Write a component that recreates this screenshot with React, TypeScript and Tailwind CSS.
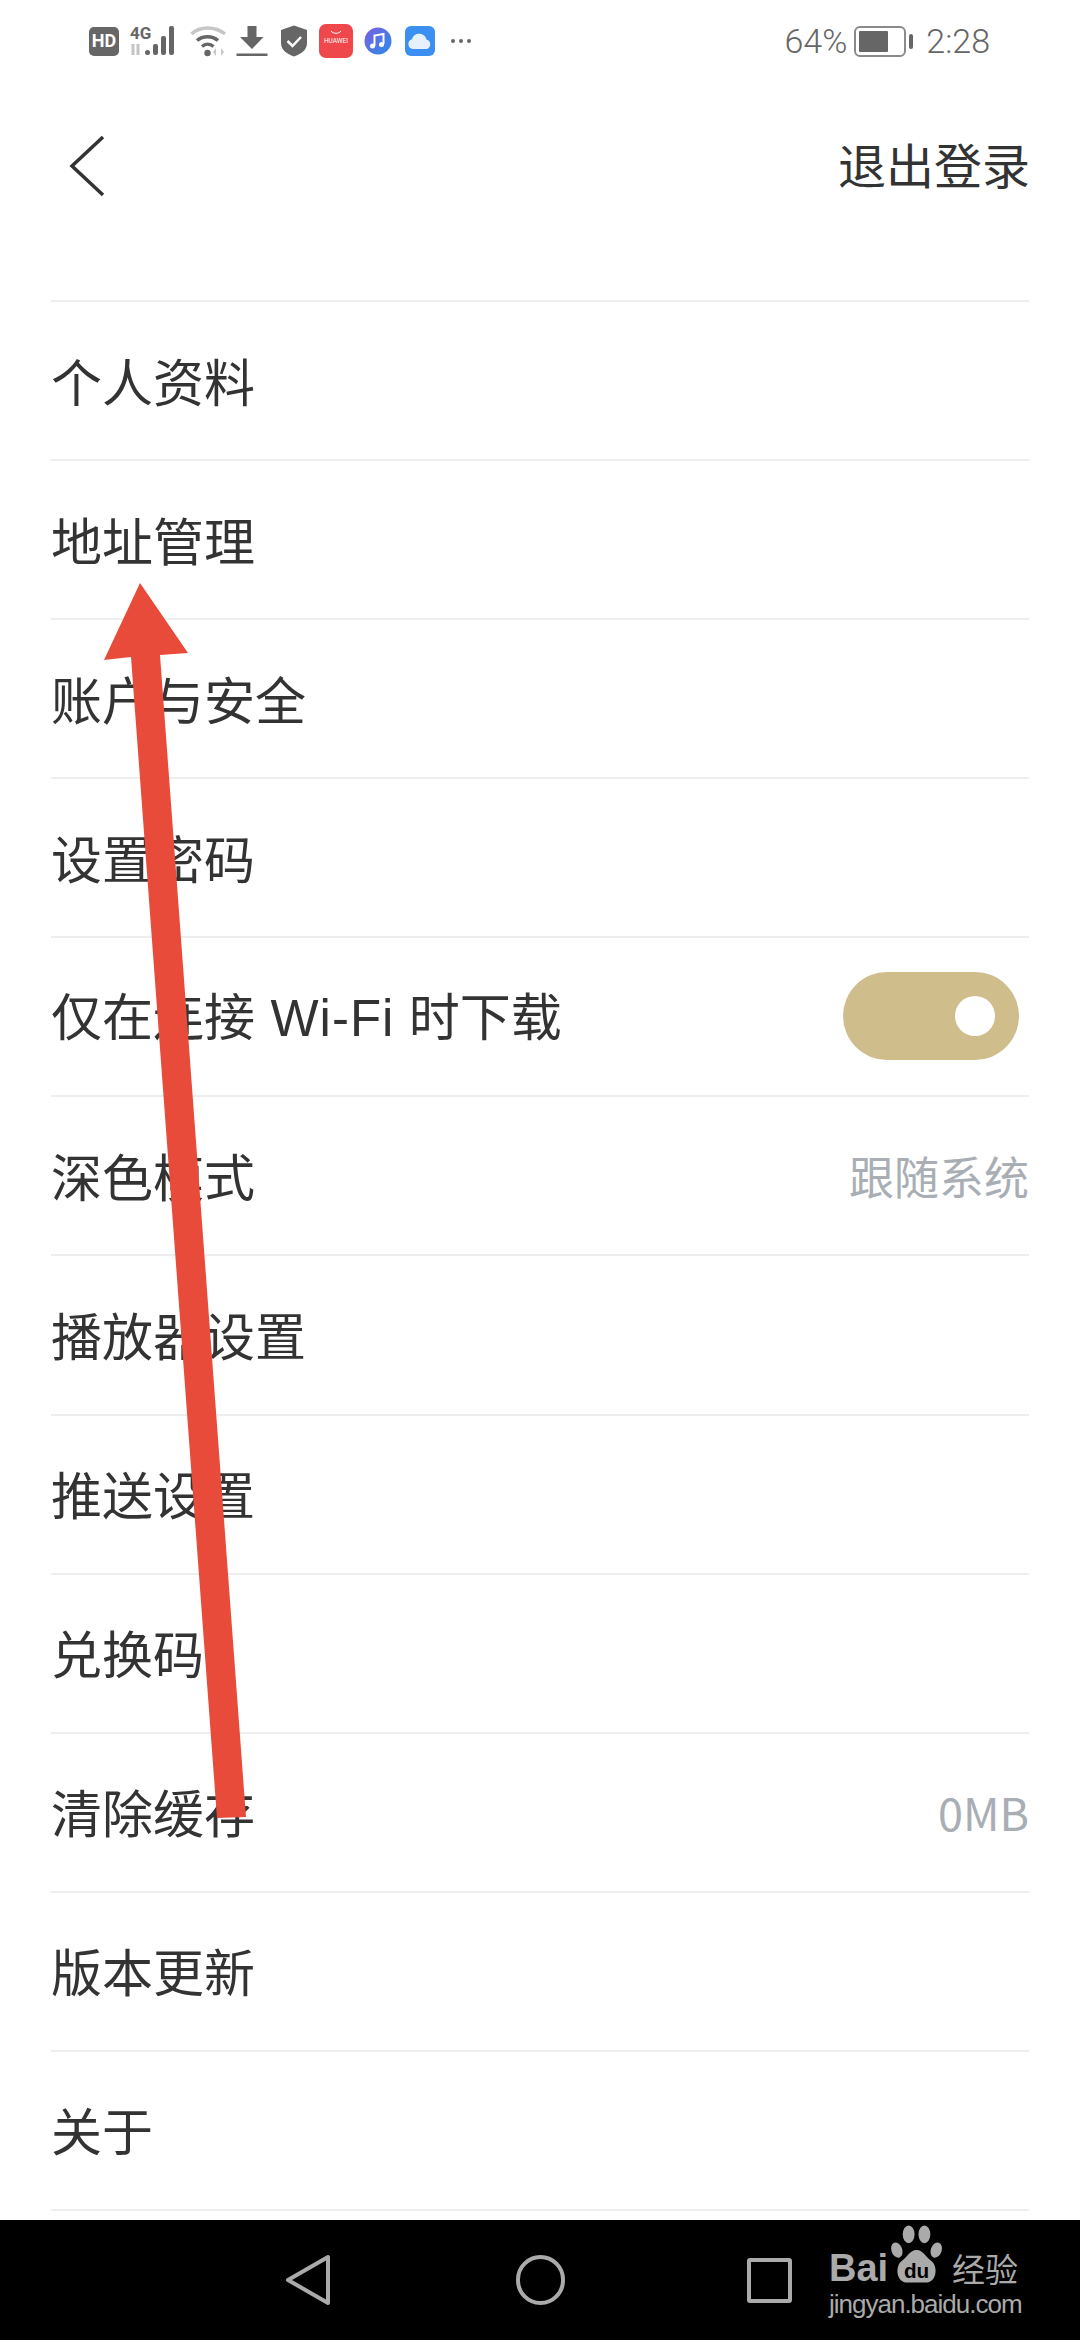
import type { ReactNode } from "react";

const cjk = "font-['Noto_Sans_CJK_SC','Noto_Sans',sans-serif]";

type Row = { id: string; label: ReactNode; value?: string; toggle?: boolean };

const rows: Row[] = [
  { id: "profile", label: "个人资料" },
  { id: "address", label: "地址管理" },
  { id: "account", label: "账户与安全" },
  { id: "password", label: "设置密码" },
  {
    id: "wifi",
    label: (
      <>
        仅在连接 <span className="ml-[4px] mr-[3px] font-['Liberation_Sans',sans-serif] tracking-[1px]">Wi-Fi</span> 时下载
      </>
    ),
    toggle: true,
  },
  { id: "dark", label: "深色模式", value: "跟随系统" },
  { id: "player", label: "播放器设置" },
  { id: "push", label: "推送设置" },
  { id: "code", label: "兑换码" },
  { id: "cache", label: "清除缓存", value: "0MB" },
  { id: "update", label: "版本更新" },
  { id: "about", label: "关于" },
];

function StatusIcons() {
  return (
    <div className="flex items-center">
      <div className="ml-[89px] flex h-[29px] w-[30px] items-center justify-center rounded-[5px] bg-[#666] font-['Roboto',sans-serif] text-[18px] font-bold leading-none text-white">
        HD
      </div>
      {/* 4G + signal */}
      <svg className="ml-[11px]" width="50" height="40" viewBox="0 -4 50 40">
        <text x="0" y="14" fontFamily="Roboto, sans-serif" fontSize="17" fontWeight="700" fill="#666">4G</text>
        <path d="M3 19v11M8 19v11" stroke="#c4c4c4" strokeWidth="3" />
        <rect x="15" y="25" width="5" height="5" rx="2.5" fill="#666" />
        <rect x="23" y="19" width="5" height="11" rx="2" fill="#666" />
        <rect x="31" y="11" width="5" height="19" rx="2" fill="#666" />
        <rect x="39" y="1" width="5" height="29" rx="2" fill="#666" />
      </svg>
      {/* wifi */}
      <svg className="ml-[10px]" width="38" height="32" viewBox="0 0 38 32">
        <path d="M1.5 9C10 1 25 1 35 9" fill="none" stroke="#c6c6c6" strokeWidth="3.5" />
        <path d="M7 15.5C13 10.5 22 10.5 28 15.5" fill="none" stroke="#666" strokeWidth="3.5" />
        <path d="M12 21.5C15.5 18.5 20 18.5 23.5 21.5" fill="none" stroke="#666" strokeWidth="3.5" />
        <circle cx="17.5" cy="28" r="3.2" fill="#666" />
        <path d="M26 31v-8l-3 4zM31 23v8l3-4z" fill="#c6c6c6" />
      </svg>
      {/* download */}
      <svg className="ml-[8px]" width="32" height="32" viewBox="0 0 32 32">
        <path d="M11.5 1h9v11h7L16 24 4 12h7.5z" fill="#666" />
        <rect x="0.5" y="28.5" width="31" height="2.5" fill="#666" />
      </svg>
      {/* shield */}
      <svg className="ml-[13px]" width="26" height="32" viewBox="0 0 26 32">
        <path d="M13 0.5 26 5v13c0 7-6 11-13 13.5C6 29 0 25 0 18V5z" fill="#666" />
        <path d="M6.5 16l5 5 8.5-9" fill="none" stroke="#fff" strokeWidth="2.5" />
      </svg>
      <div className="ml-[12px] flex h-[34px] w-[34px] flex-col items-center rounded-[7px] bg-[#f0474c]">
        <svg className="mt-[6px]" width="12" height="5" viewBox="0 0 12 5">
          <path d="M1 1c2 3 8 3 10 0" fill="none" stroke="#fff" strokeWidth="1" />
        </svg>
        <span className="mt-[3px] font-['Roboto',sans-serif] text-[6.5px] leading-none text-white">HUAWEI</span>
      </div>
      {/* music */}
      <svg className="ml-[11px]" width="28" height="28" viewBox="0 0 28 28">
        <defs>
          <linearGradient id="musicFill" x1="0" y1="0" x2="1" y2="1">
            <stop offset="0" stopColor="#7a5fe0" />
            <stop offset="1" stopColor="#2c8be8" />
          </linearGradient>
        </defs>
        <circle cx="14" cy="14" r="13.5" fill="url(#musicFill)" />
        <path d="M10.5 19V8.5l9-1.5v10" fill="none" stroke="#fff" strokeWidth="2" />
        <circle cx="8.5" cy="19" r="2.5" fill="#fff" />
        <circle cx="17.5" cy="17.5" r="2.5" fill="#fff" />
      </svg>
      {/* cloud */}
      <div className="ml-[13px] flex h-[30px] w-[30px] items-center justify-center rounded-[6px] bg-[#3a8ff0]">
        <svg width="26" height="18" viewBox="0 0 26 18">
          <path d="M6 17a5 5 0 0 1-1-9.8C6 3 10 1 14 2c3 .8 5 3 5.5 5.5A5 5 0 0 1 20 17z" fill="#e6f1fd" />
        </svg>
      </div>
      <div className="ml-[16px] flex gap-[4px]">
        <span className="h-[4px] w-[4px] rounded-full bg-[#666]" />
        <span className="h-[4px] w-[4px] rounded-full bg-[#666]" />
        <span className="h-[4px] w-[4px] rounded-full bg-[#666]" />
      </div>
    </div>
  );
}

function Battery() {
  return (
    <div className="mx-[7px] flex items-center gap-[3px]">
      <div className="flex h-[31px] w-[52px] items-center rounded-[6px] border-2 border-[#8a8a8a] p-[3px]">
        <div className="h-full w-[29px] rounded-[1px] bg-[#666]" />
      </div>
      <div className="h-[15px] w-[4px] rounded-[2px] bg-[#666]" />
    </div>
  );
}

function Toggle() {
  return (
    <div className="mr-[10px] flex h-[88px] w-[176px] items-center justify-end rounded-full bg-[#cfbe8c] pr-[24px]">
      <div className="h-[40px] w-[40px] rounded-full bg-white" />
    </div>
  );
}

function ArrowOverlay() {
  return (
    <svg className="absolute left-0 top-0" width="1080" height="2340" viewBox="0 0 1080 2340">
      <polygon
        points="140,583 188,653 160,655 246,1817 217,1818 131,657 104,660"
        fill="#e94b3a"
      />
    </svg>
  );
}

function Watermark() {
  return (
    <div className="absolute left-[829px] top-[2224px] w-[200px] whitespace-nowrap text-[#aaa]">
      <div className="flex h-[62px] items-end">
        <span className="w-[56px] shrink-0 font-['Liberation_Sans',sans-serif] text-[38px] font-bold leading-[36px]">Bai</span>
        <svg className="shrink-0" width="67" height="62" viewBox="0 0 68 62">
          <ellipse cx="24" cy="10" rx="6" ry="9" fill="#aaa" />
          <ellipse cx="40" cy="10" rx="6" ry="9" fill="#aaa" />
          <ellipse cx="12" cy="26" rx="5.5" ry="8" fill="#aaa" transform="rotate(-20 12 26)" />
          <ellipse cx="52" cy="26" rx="5.5" ry="8" fill="#aaa" transform="rotate(20 52 26)" />
          <path d="M32 26c7 0 9 7 15 11 7 5 6 22-6 22H23c-12 0-13-17-6-22 6-4 8-11 15-11z" fill="#aaa" />
          <text x="32" y="54" textAnchor="middle" fontFamily="Liberation Sans, sans-serif" fontSize="21" fontWeight="700" fill="#000">du</text>
        </svg>
        <span className={`${cjk} shrink-0 text-[33px] leading-[36px]`}>经验</span>
      </div>
      <div className="mt-[3px] font-['Liberation_Sans',sans-serif] text-[26px] leading-[30px] tracking-[-1px]">jingyan.baidu.com</div>
    </div>
  );
}

export default function App() {
  return (
    <div className={`relative flex h-[2340px] w-[1080px] flex-col overflow-hidden bg-white ${cjk}`}>
      <div className="flex h-[82px] items-center justify-between pr-[90px]">
        <StatusIcons />
        <div className="flex items-center font-['Roboto',sans-serif] text-[34px] font-light text-[#666]">
          <span>64%</span>
          <Battery />
          <span className="ml-[6px]">2:28</span>
        </div>
      </div>

      <div className="flex h-[168px] items-center justify-between pl-[68px] pr-[50px]">
        <svg width="38" height="62" viewBox="0 0 38 62">
          <path d="M35 2 4 31l31 29" fill="none" stroke="#333" strokeWidth="3.5" />
        </svg>
        <span className="pb-[7px] text-[48px] leading-none text-[#333]">退出登录</span>
      </div>

      <div className="mx-[51px] mt-[50px] border-t-2 border-[#eeeeee]">
        {rows.map((row) => (
          <div
            key={row.id}
            className="flex h-[159.08px] items-center justify-between border-b-2 border-[#eeeeee] pb-[1px]"
          >
            <span className="text-[51px] leading-none text-[#333]">{row.label}</span>
            {row.toggle && <Toggle />}
            {row.value && <span className="text-[45px] leading-none text-[#a9aeb4]">{row.value}</span>}
          </div>
        ))}
      </div>

      <div className="mt-auto flex h-[120px] items-center bg-black">
        <svg className="ml-[285px]" width="46" height="52" viewBox="0 0 46 52">
          <path d="M43 3v46L3 26z" fill="none" stroke="#aaa" strokeWidth="4" strokeLinejoin="round" />
        </svg>
        <div className="ml-[185px] h-[50px] w-[49px] rounded-full border-4 border-[#aaa]" />
        <div className="ml-[182px] h-[45px] w-[45px] rounded-[3px] border-4 border-[#aaa]" />
      </div>

      <ArrowOverlay />
      <Watermark />
    </div>
  );
}
